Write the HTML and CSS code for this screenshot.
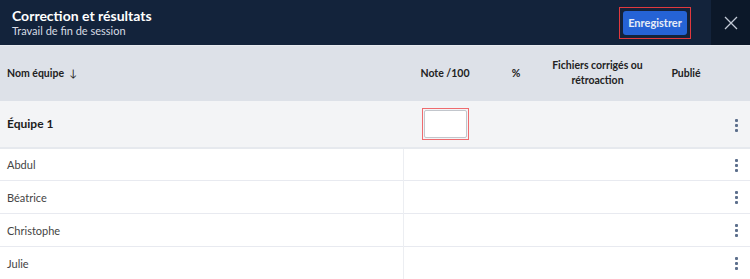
FILE: index.html
```html
<!DOCTYPE html>
<html lang="fr">
<head>
    <meta charset="UTF-8">
    <title>Correction et résultats</title>
    <link rel="stylesheet" href="styles.css">
</head>
<body>
    <header class="topbar">
        <div class="titles">
            <h1>Correction et résultats</h1>
            <p>Travail de fin de session</p>
        </div>
        <div class="save-wrap">
            <div class="save-ring">
                <button class="save">Enregistrer</button>
            </div>
        </div>
        <button class="close" aria-label="Fermer">
            <svg width="14" height="14" viewBox="0 0 14 14"><path d="M1 1 L13 13 M13 1 L1 13" stroke="#c3cad6" stroke-width="1.3" fill="none"/></svg>
        </button>
    </header>

    <table class="grid">
        <colgroup>
            <col class="c-name">
            <col class="c-note">
            <col class="c-pct">
            <col class="c-files">
            <col class="c-pub">
            <col class="c-act">
        </colgroup>
        <thead>
            <tr>
                <th class="left">Nom équipe <span class="arrow">↓</span></th>
                <th>Note /100</th>
                <th>%</th>
                <th>Fichiers corrigés ou rétroaction</th>
                <th>Publié</th>
                <th></th>
            </tr>
        </thead>
        <tbody>
            <tr class="team">
                <td class="left">Équipe 1</td>
                <td><div class="note-wrap"><input class="note" type="text"></div></td>
                <td></td>
                <td></td>
                <td></td>
                <td><span class="kebab"><i></i><i></i><i></i></span></td>
            </tr>
            <tr class="member">
                <td class="left split">Abdul</td>
                <td></td><td></td><td></td><td></td>
                <td><span class="kebab"><i></i><i></i><i></i></span></td>
            </tr>
            <tr class="member">
                <td class="left split">Béatrice</td>
                <td></td><td></td><td></td><td></td>
                <td><span class="kebab"><i></i><i></i><i></i></span></td>
            </tr>
            <tr class="member">
                <td class="left split">Christophe</td>
                <td></td><td></td><td></td><td></td>
                <td><span class="kebab"><i></i><i></i><i></i></span></td>
            </tr>
            <tr class="member">
                <td class="left split">Julie</td>
                <td></td><td></td><td></td><td></td>
                <td><span class="kebab"><i></i><i></i><i></i></span></td>
            </tr>
        </tbody>
    </table>
</body>
</html>
```

FILE: styles.css
```css
html {
    background: #fff;
}
body {
    margin: 0;
    font-family: Lato, "Liberation Sans", sans-serif;
    color: #1f2937;
}
.topbar {
    display: flex;
    align-items: stretch;
    height: 45px;
    background: #13233b;
    color: #fff;
}
.titles {
    flex: 1;
    padding: 7px 0 0 12px;
}
.titles h1 {
    margin: 0;
    font-size: 14px;
    line-height: 17px;
    font-weight: bold;
}
.titles p {
    margin: 0;
    font-size: 11px;
    line-height: 14px;
    color: #d7dce4;
}
.save-wrap {
    display: flex;
    align-items: center;
    margin-right: 20px;
}
.save-ring {
    border: 1.5px solid #e0393e;
    padding: 3px;
    display: flex;
}
.save {
    width: 64px;
    height: 24px;
    border: 0;
    border-radius: 3px;
    background: #2563d6;
    color: #e6ecf7;
    font-family: Lato, "Liberation Sans", sans-serif;
    font-size: 11px;
    font-weight: bold;
    padding: 0;
    cursor: pointer;
}
.close {
    width: 39px;
    border: 0;
    background: #0c1829;
    display: flex;
    align-items: center;
    justify-content: center;
    padding: 0;
}
.grid {
    width: 750px;
    table-layout: fixed;
    border-collapse: collapse;
    border-top: 1px solid #e7eaef;
}
.c-name { width: 403px; }
.c-note { width: 84px; }
.c-pct { width: 58px; }
.c-files { width: 105px; }
.c-pub { width: 72px; }
.c-act { width: 28px; }
thead tr {
    background: #dde1e8;
    height: 55px;
}
th {
    font-size: 10.5px;
    font-weight: bold;
    color: #222;
    text-align: center;
    line-height: 15px;
    padding: 0 4px;
}
th.left, td.left {
    text-align: left;
    padding-left: 7px;
}
.arrow {
    font-weight: normal;
    margin-left: 3px;
}
td {
    padding: 0;
    text-align: center;
}
.team {
    background: #f3f4f6;
    height: 47px;
    border-bottom: 2px solid #e6e9ee;
}
.team td.left {
    font-size: 12px;
    font-weight: bold;
    color: #1c1c1c;
}
.note-wrap {
    display: inline-flex;
    padding: 1px;
    border: 1.5px solid #ef6b6e;
    vertical-align: middle;
}
.note {
    width: 41px;
    height: 26px;
    border: 1.5px solid #c2c6cc;
    border-radius: 2px;
    background: #fff;
    padding: 0;
}
.member {
    height: 33px;
    border-bottom: 1px solid #e8eaf0;
}
.member td {
    font-size: 11px;
    color: #444;
}
td.split {
    border-right: 1px solid #eceef2;
}
.kebab {
    display: inline-flex;
    flex-direction: column;
    gap: 2px;
    vertical-align: middle;
}
.kebab i {
    width: 3px;
    height: 3px;
    border-radius: 1px;
    background: #5c6f8c;
}
```
